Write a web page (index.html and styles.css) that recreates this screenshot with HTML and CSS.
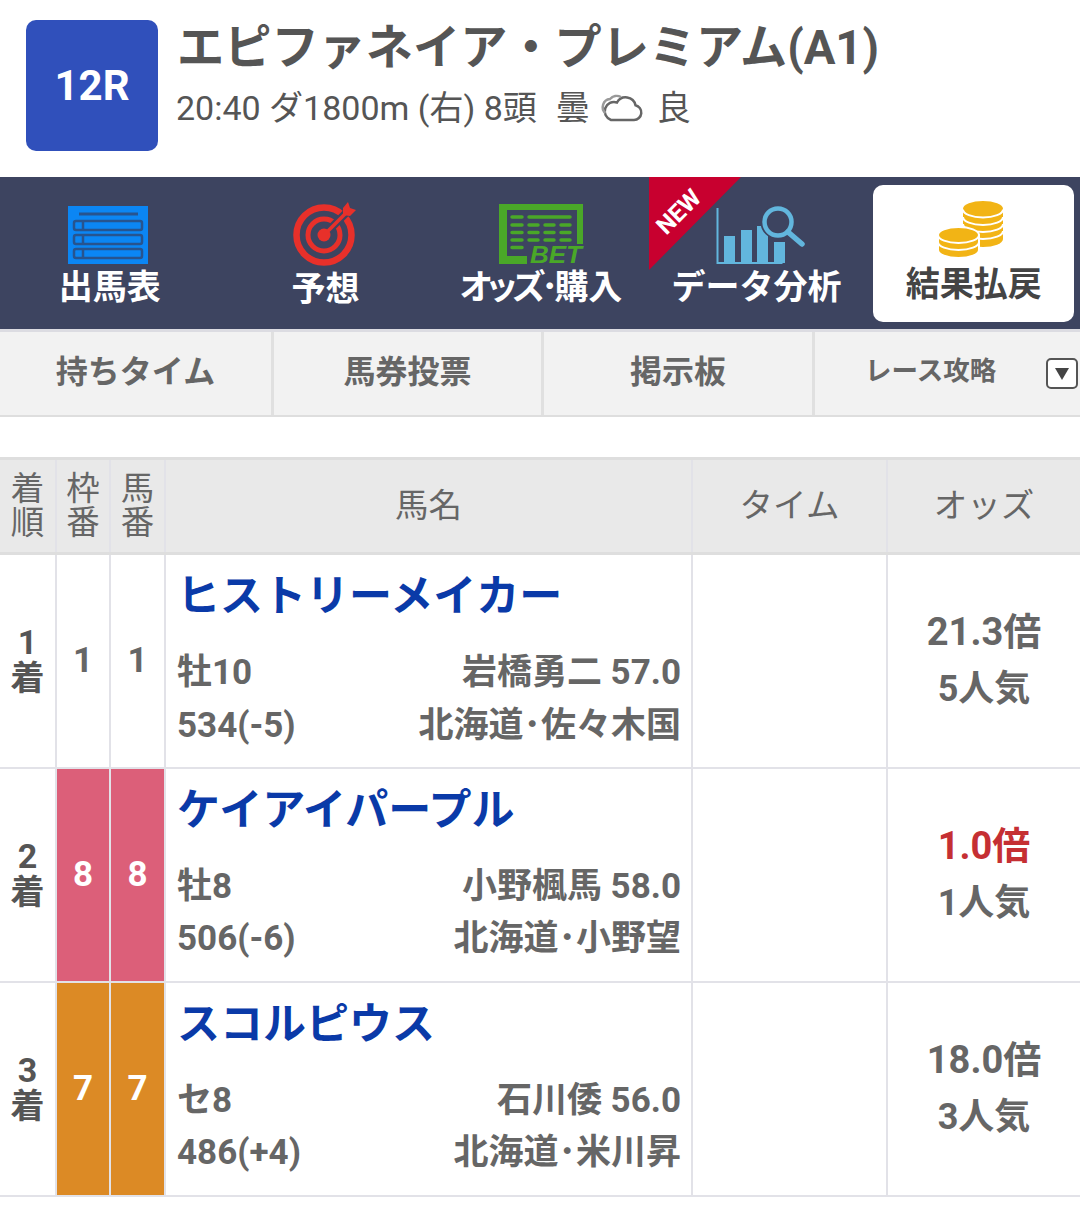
FILE: index.html
```html
<!DOCTYPE html>
<html lang="ja">
<head>
<meta charset="utf-8">
<title>12R</title>
<link rel="stylesheet" href="styles.css">
</head>
<body>
<header class="race">
  <div class="badge">12R</div>
  <div class="race-info">
    <div class="race-name">エピファネイア・プレミアム(A1)</div>
    <div class="race-meta"><span>20:40 ダ1800m (右) 8頭</span><span class="w1">曇</span>
      <svg class="cloud" viewBox="0 0 44 30" width="44" height="30"><path d="M11 27h23a7.500 7.500 0 0 0 1.500-14.800A10 10 0 0 0 17 9.500 8.800 8.800 0 0 0 11 27z" fill="none" stroke="#666" stroke-width="2.500"/><path d="M5.500 20A8 8 0 0 1 10 6a9 9 0 0 1 11-2" fill="none" stroke="#999" stroke-width="2.500"/></svg>
      <span>良</span></div>
  </div>
</header>
<nav class="nav">
  <a class="nav-item">
    <svg class="ico ico-list" viewBox="0 0 80 58" width="80" height="58"><rect width="80" height="58" fill="#0b86f4"/><g fill="none" stroke="#27548f" stroke-width="2.500"><path d="M11 8h59" stroke-width="3"/><rect x="6" y="15" width="68" height="9" rx="2"/><rect x="6" y="29" width="68" height="9" rx="2"/><rect x="6" y="43" width="68" height="9" rx="2"/><path d="M15 15v9M15 29v9M15 43v9"/></g></svg>
    <span>出馬表</span></a>
  <a class="nav-item nav-low">
    <svg class="ico" viewBox="0 0 64 64" width="64" height="64"><g fill="none" stroke="#e8302a"><circle cx="31" cy="33" r="27.500" stroke-width="6.500"/><circle cx="31" cy="33" r="16" stroke-width="5"/></g><path d="M31 33 54 10" stroke="#3d4460" stroke-width="8"/><circle cx="31" cy="33" r="6.500" fill="#e8302a"/><path d="M31 33 54 10" stroke="#e8302a" stroke-width="3.500"/><path d="M50 6l5-6 2 6 6 2-6 6-7-1z" fill="#e8302a"/></svg>
    <span>予想</span></a>
  <a class="nav-item">
    <svg class="ico" viewBox="0 0 84 60" width="84" height="60"><path d="M0 0h84v40H78V6H8V52H28V60H0z" fill="#4aa828"/><g stroke="#4aa828" stroke-width="3.500" stroke-linecap="round"><path d="M13 13h10M30 13h41M13 21h10M30 21h9M46 21h9M62 21h9M13 28.500h10M30 28.500h9M46 28.500h9M62 28.500h9M13 36h10M30 36h9M46 36h9M62 36h9M13 43.500h10"/></g><text class="bet" x="31" y="59" textLength="52" lengthAdjust="spacingAndGlyphs">BET</text></svg>
    <span><span class="tight">オッズ･</span>購入</span></a>
  <a class="nav-item">
    <svg class="ico ico-data" viewBox="0 0 90 62" width="90" height="62"><path d="M1.500 4v55h65" fill="none" stroke="#62b6dd" stroke-width="2"/><g fill="#62b6dd"><rect x="8" y="32" width="11" height="27"/><rect x="25" y="26" width="11" height="33"/><rect x="41" y="22" width="11" height="37"/><rect x="58" y="38" width="11" height="21"/></g><circle cx="62" cy="18" r="13.500" fill="#3d4460" stroke="#3d4460" stroke-width="8"/><circle cx="62" cy="18" r="13.500" fill="#3d4460" stroke="#62b6dd" stroke-width="4.500"/><path d="M72 28l14 12" stroke="#62b6dd" stroke-width="5.500" stroke-linecap="round"/></svg>
    <span>データ分析</span></a>
  <a class="nav-item active">
    <svg class="ico ico-coins" viewBox="0 0 66 58" width="66" height="58"><path d="M25 8V38A20 8 0 0 0 65 38V8z" fill="#f2b415"/><ellipse cx="45" cy="8" rx="20" ry="8" fill="#f2b415"/><path d="M25 8.500A20 8 0 0 0 65 8.500M25 16A20 8 0 0 0 65 16M25 23A20 8 0 0 0 65 23M25 30A20 8 0 0 0 65 30" fill="none" stroke="#fff" stroke-width="2"/><path d="M0 34V49A20.500 8 0 0 0 41 49V34z" fill="#f2b415" stroke="#fff" stroke-width="2"/><ellipse cx="20.500" cy="34" rx="20.500" ry="8" fill="#f2b415" stroke="#fff" stroke-width="2"/><path d="M0 41A20.500 8 0 0 0 41 41" fill="none" stroke="#fff" stroke-width="2"/></svg>
    <span>結果払戻</span></a>
  <div class="new"><span>NEW</span></div>
</nav>
<div class="tabs">
  <a class="tab">持ちタイム</a>
  <a class="tab">馬券投票</a>
  <a class="tab">掲示板</a>
  <a class="tab tab-more"><span>レース攻略</span><i class="more"></i></a>
</div>
<table class="results">
  <colgroup><col class="c1"><col class="c2"><col class="c3"><col class="c4"><col class="c5"><col class="c6"></colgroup>
  <thead>
    <tr>
      <th class="narrow">着<br>順</th><th class="narrow">枠<br>番</th><th class="narrow">馬<br>番</th>
      <th>馬名</th><th>タイム</th><th>オッズ</th>
    </tr>
  </thead>
  <tbody>
    <tr>
      <td class="rank">1<br>着</td><td class="num">1</td><td class="num">1</td>
      <td class="horse">
        <div class="hname">ヒストリーメイカー</div>
        <div class="hrow"><span>牡10</span><span>岩橋勇二 57.0</span></div>
        <div class="hrow"><span>534(-5)</span><span>北海道･佐々木国</span></div>
      </td>
      <td></td>
      <td class="odds-cell"><div>21.3倍</div><div>5人気</div></td>
    </tr>
    <tr>
      <td class="rank">2<br>着</td><td class="num pink">8</td><td class="num pink">8</td>
      <td class="horse">
        <div class="hname">ケイアイパープル</div>
        <div class="hrow"><span>牡8</span><span>小野楓馬 58.0</span></div>
        <div class="hrow"><span>506(-6)</span><span>北海道･小野望</span></div>
      </td>
      <td></td>
      <td class="odds-cell"><div class="fav">1.0倍</div><div>1人気</div></td>
    </tr>
    <tr>
      <td class="rank">3<br>着</td><td class="num orange">7</td><td class="num orange">7</td>
      <td class="horse">
        <div class="hname">スコルピウス</div>
        <div class="hrow"><span>セ8</span><span>石川倭 56.0</span></div>
        <div class="hrow"><span>486(+4)</span><span>北海道･米川昇</span></div>
      </td>
      <td></td>
      <td class="odds-cell"><div>18.0倍</div><div>3人気</div></td>
    </tr>
  </tbody>
</table>
</body>
</html>
```
FILE: styles.css
```css
* { box-sizing: border-box; }
html, body { margin: 0; padding: 0; background: #fff; }
body { width: 1080px; height: 1207px; overflow: hidden; font-family: Roboto, "Noto Sans CJK JP", sans-serif; color: #555; }

.race { display: flex; height: 177px; padding: 20px 0 0 26px; gap: 19px; }
.badge { width: 132px; height: 131px; border-radius: 10px; background: #3050bb; color: #fff; font-size: 42px; font-weight: 700; display: flex; align-items: center; justify-content: center; }
.race-info { display: flex; flex-direction: column; }
.race-name { font-size: 47.200px; font-weight: 700; line-height: 56px; white-space: nowrap; color: #555; }
.race-meta { display: flex; align-items: center; font-size: 34px; line-height: 44px; margin-top: 10px; color: #555; white-space: nowrap; margin-left: -1px; }
.w1 { margin-left: 19px; }
.cloud { margin: 0 13px 0 10px; }

.nav { position: relative; display: grid; grid-template-columns: repeat(5, minmax(0, 1fr)); height: 152px; background: #3d4460; padding: 8px 0 7px 2px; }
.nav-item { display: flex; flex-direction: column; align-items: center; justify-content: flex-end; color: #fff; font-size: 34px; font-weight: 700; line-height: 40px; padding-bottom: 15px; white-space: nowrap; }
.nav-low { padding-bottom: 13px; }
.ico { display: block; margin-bottom: 3px; overflow: visible; }
.ico-list { margin-right: 4px; }
.ico-data { margin-left: 8px; margin-bottom: 1px; }
.ico-coins { margin-right: 6px; margin-bottom: 5px; }
.tight { font-feature-settings: "palt"; letter-spacing: -4px; }
.nav-item.active { background: #fff; color: #444; border-radius: 10px; margin: 0 6px 0 9px; padding-bottom: 18px; }
.bet { font: italic 700 24px "Liberation Sans", sans-serif; fill: #4aa828; }
.new { position: absolute; left: 649px; top: 0; width: 92px; height: 93px; background: #c8002f; clip-path: polygon(0 0, 100% 0, 0 100%); }
.new span { position: absolute; left: 4px; top: 21px; color: #fff; font: 700 24px Roboto, sans-serif; transform: rotate(-45deg); }

.tabs { display: grid; grid-template-columns: 274px 270px 271px 1fr; height: 88px; background: #f2f2f2; border-top: 3px solid #dcdce2; border-bottom: 2px solid #dedede; }
.tab { display: flex; align-items: center; justify-content: center; border-right: 3px solid #e0e0e0; font-size: 32px; font-weight: 700; color: #666; padding-bottom: 10px; }
.tab-more { border-right: 0; font-size: 26.500px; justify-content: flex-start; padding-left: 50px; position: relative; }
.more { position: absolute; right: 2px; top: 26px; width: 32px; height: 31px; background: #fff; border: 2px solid #555; border-radius: 5px; }
.more::after { content: ""; position: absolute; left: 7px; top: 8px; border: 7px solid transparent; border-top: 12px solid #444; border-bottom: 0; }

.results { margin-top: 40px; width: 1080px; table-layout: fixed; border-collapse: collapse; }
.c1 { width: 56px; } .c2 { width: 54px; } .c3 { width: 55px; } .c4 { width: 527px; } .c5 { width: 195px; }
.results th, .results td { border: 2px solid #e2e2e8; padding: 0; text-align: center; }
.results thead tr { height: 95px; }
.results tbody tr { height: 214px; }
.results th { background: #e9e9e9; font-weight: 400; font-size: 33.500px; color: #666; border-top: 3px solid #dedede; border-bottom: 3px solid #dedede; padding-bottom: 7px; }
.results th.narrow { font-size: 33.500px; line-height: 34px; padding-bottom: 1px; }
.results tr > :first-child { border-left: 0; }
.results tr > :last-child { border-right: 0; }
.results td.rank { font-size: 34px; line-height: 36px; font-weight: 700; color: #555; padding-bottom: 2px; }
.results td.num { font-size: 35px; font-weight: 700; color: #666; padding-bottom: 0; }
.results td.pink { background: #dc5f79; color: #fff; }
.results td.orange { background: #dc8a25; color: #fff; }
.results td.horse { text-align: left; padding: 0 10px 0 11px; vertical-align: top; }
.hname { font-size: 43px; font-weight: 700; color: #0a3aa8; line-height: 60px; margin-top: 11px; margin-bottom: 21px; white-space: nowrap; }
.hrow { display: flex; justify-content: space-between; font-size: 35px; font-weight: 700; color: #666; line-height: 52.500px; white-space: nowrap; }
.odds-cell { font-size: 38px; font-weight: 700; color: #666; line-height: 57px; }
.odds-cell div + div { font-size: 36px; }
.results td.odds-cell { padding-bottom: 0; }
.results td.odds-cell .fav { color: #c52f33; }
```
